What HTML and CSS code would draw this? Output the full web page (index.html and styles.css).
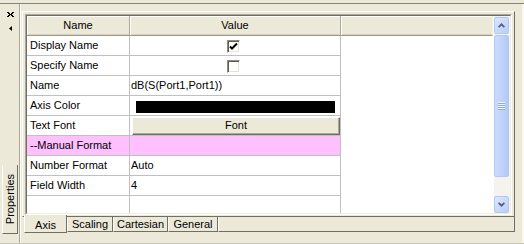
FILE: index.html
```html
<!DOCTYPE html>
<html lang="en">
<head>
  <meta charset="UTF-8">
  <title>Properties</title>
  <link rel="stylesheet" href="styles.css">
</head>
<body>
  <div class="dock">
    <!-- barra lateral -->
    <div class="side">
      <svg class="close" width="7" height="5" viewBox="0 0 7 5">
        <path d="M0 0h2v1h1v1h1V1h1V0h2v1H6v1H5v1h1v1h1v1H5V4H4V3H3v1H2v1H0V4h1V3h1V2H1V1H0z" fill="#000"/>
      </svg>
      <svg class="pin" width="3" height="5" viewBox="0 0 3 5">
        <path d="M3 0v5L0 2.5z" fill="#000"/>
      </svg>
      <div class="side-tab"><span>Properties</span></div>
    </div>

    <div class="main">
      <div class="panel">
        <div class="gridbox">
          <div class="gridin">
            <div class="grid">
              <div class="row head">
                <div class="cell c1">Name</div>
                <div class="cell c2">Value</div>
                <div class="cell c3"></div>
              </div>
              <div class="row">
                <div class="cell c1">Display Name</div>
                <div class="cell c2 center">
                  <span class="check">
                    <svg width="9" height="9" viewBox="0 0 9 9"><path d="M1 4.5l2 2 5-5" fill="none" stroke="#000" stroke-width="2"/></svg>
                  </span>
                </div>
                <div class="cell c3"></div>
              </div>
              <div class="row">
                <div class="cell c1">Specify Name</div>
                <div class="cell c2 center"><span class="check"></span></div>
                <div class="cell c3"></div>
              </div>
              <div class="row">
                <div class="cell c1">Name</div>
                <div class="cell c2">dB(S(Port1,Port1))</div>
                <div class="cell c3"></div>
              </div>
              <div class="row">
                <div class="cell c1">Axis Color</div>
                <div class="cell c2"><div class="swatch"></div></div>
                <div class="cell c3"></div>
              </div>
              <div class="row">
                <div class="cell c1">Text Font</div>
                <div class="cell c2"><div class="fontbtn">Font</div></div>
                <div class="cell c3"></div>
              </div>
              <div class="row pink">
                <div class="cell c1">--Manual Format</div>
                <div class="cell c2"></div>
                <div class="cell c3"></div>
              </div>
              <div class="row">
                <div class="cell c1">Number Format</div>
                <div class="cell c2">Auto</div>
                <div class="cell c3"></div>
              </div>
              <div class="row">
                <div class="cell c1">Field Width</div>
                <div class="cell c2">4</div>
                <div class="cell c3"></div>
              </div>
              <div class="row last">
                <div class="cell c1"></div>
                <div class="cell c2"></div>
                <div class="cell c3"></div>
              </div>
            </div>

            <!-- scrollbar -->
            <div class="scroll">
              <div class="sbtn">
                <svg width="7" height="5" viewBox="0 0 7 5"><path d="M0.6 4.2L3.5 1.3 6.4 4.2" fill="none" stroke="#4D6185" stroke-width="1.8"/></svg>
              </div>
              <div class="thumb"><div class="grip"></div></div>
              <div class="sbtn down">
                <svg width="7" height="5" viewBox="0 0 7 5"><path d="M0.6 0.8L3.5 3.7 6.4 0.8" fill="none" stroke="#4D6185" stroke-width="1.8"/></svg>
              </div>
            </div>
          </div>
        </div>
      </div>

      <div class="tabs">
        <div class="tab on">Axis</div>
        <div class="tab t-scaling">Scaling</div>
        <div class="tab t-cart">Cartesian</div>
        <div class="tab t-gen">General</div>
        <div class="tab fill"></div>
      </div>
    </div>
  </div>
</body>
</html>
```

FILE: styles.css
```css
body {
  margin: 0;
  background: #ECE9D8;
  font: 11px "Liberation Sans", Arial, sans-serif;
  color: #000;
  overflow: hidden;
}

.dock {
  display: flex;
  height: 239px;
  margin-top: 3px;
  border-top: 1px solid #85837A;
  border-bottom: 1px solid #C9C6B7;
  box-shadow: inset -2px 0 0 #F7F6F0;
}

/* barra lateral */
.side {
  width: 19px;
  border-right: 1px solid #ACA899;
  box-shadow: 1px 0 0 #fff;
  display: flex;
  flex-direction: column;
  align-items: center;
}

.side .close {
  margin-top: 8px;
  margin-left: 1px;
}

.side .pin {
  margin-top: 9px;
  margin-left: 1px;
}

.side-tab {
  margin-top: auto;
  margin-bottom: 9px;
  width: 14px;
  height: 68px;
  border: 1px solid;
  border-color: #fff #716F64 #716F64 #fff;
  border-top: none;
  display: flex;
  align-items: center;
  justify-content: center;
}

.side-tab span {
  writing-mode: vertical-rl;
  transform: rotate(180deg);
  line-height: 14px;
}

.main {
  flex: 1;
  padding: 7px 9px 0 2px;
  display: flex;
  flex-direction: column;
}

.panel {
  border: 1px solid;
  border-color: #fff #716F64 #716F64 #fff;
  padding: 2px 2px 1px 2px;
}

.gridbox {
  border: 1px solid;
  border-color: #ACA899 #fff #fff #ACA899;
}

.gridin {
  display: flex;
  height: 197px;
  border: 1px solid;
  border-color: #716F64 #F1EFE2 #F1EFE2 #716F64;
  background: #fff;
}

/* tabla de propiedades */
.grid {
  flex: 1;
  display: flex;
  flex-direction: column;
}

.row {
  display: flex;
  height: 20px;
  flex: none;
}

.row.last {
  flex: 1;
}

.cell {
  box-sizing: border-box;
  border-right: 1px solid #C0C0C0;
  border-bottom: 1px solid #C0C0C0;
  padding-left: 3px;
  line-height: 19px;
  white-space: nowrap;
  overflow: hidden;
}

.c1 {
  width: 103px;
}

.c2 {
  width: 211px;
  padding-left: 1px;
}

.c3 {
  flex: 1;
  border: none;
}

.last .cell {
  border-bottom: none;
}

.head .cell {
  background: #ECE9D8;
  border-right: 1px solid #ACA899;
  border-bottom: 1px solid #9D9A8A;
  box-shadow: inset 1px 1px 0 #fff, inset 0 -1px 0 #D6D2C2;
  text-align: center;
  padding: 0;
}

.head .c3 {
  border-right: 1px solid #F1EFE2;
}

.pink .c1,
.pink .c2 {
  background: #FFC0FF;
}

.center {
  display: flex;
  justify-content: center;
  align-items: center;
  padding: 1px 4px 0 0;
}

.check {
  box-sizing: border-box;
  width: 13px;
  height: 13px;
  border: 1px solid;
  border-color: #8E8C80 #fff #fff #8E8C80;
  box-shadow: inset 1px 1px 0 #5E5C52, inset -1px -1px 0 #E6E3D6;
  background: #fff;
  display: flex;
  align-items: center;
  justify-content: center;
}

.swatch {
  height: 12px;
  margin: 5px 5px 0 5px;
  background: #000;
}

.fontbtn {
  box-sizing: border-box;
  height: 18px;
  margin: 1px 0 0 1px;
  border: 1px solid;
  border-color: #fff #716F64 #716F64 #fff;
  box-shadow: inset -1px -1px 0 #ACA899;
  background: #ECE9D8;
  text-align: center;
  line-height: 15px;
}

/* scrollbar */
.scroll {
  width: 17px;
  background: #F4F3EE;
  box-shadow: inset 1px 0 0 #fff;
  display: flex;
  flex-direction: column;
  padding-top: 1px;
  box-sizing: border-box;
}

.sbtn,
.thumb {
  box-sizing: border-box;
  margin: 0 1px;
  border: 1px solid #B4C8F6;
  border-radius: 2px;
}

.sbtn {
  height: 17px;
  background: linear-gradient(135deg, #DCE7FE, #B9CDFA);
  display: flex;
  align-items: center;
  justify-content: center;
}

.sbtn.down {
  margin-top: auto;
}

.thumb {
  height: 142px;
  margin-top: 1px;
  background: linear-gradient(90deg, #CCDBFC, #BED1FB 60%, #B3C8F5);
  display: flex;
  align-items: center;
  justify-content: center;
}

.grip {
  width: 7px;
  height: 8px;
  background: repeating-linear-gradient(#EEF4FE 0 1px, #8CAAEC 1px 2px);
}

/* pestañas */
.tabs {
  display: flex;
  height: 15px;
  margin-left: 2px;
}

.tab {
  box-sizing: border-box;
  height: 15px;
  border-left: 1px solid #fff;
  border-right: 1px solid #716F64;
  border-bottom: 1px solid #716F64;
  text-align: center;
  line-height: 14px;
}

.tab.on {
  width: 43px;
  height: 18px;
  margin-top: -2px;
  background: #ECE9D8;
  line-height: 20px;
}

.t-scaling {
  width: 46px;
}

.t-cart {
  width: 55px;
}

.t-gen {
  width: 50px;
}

.tab.fill {
  flex: 1;
}
```
